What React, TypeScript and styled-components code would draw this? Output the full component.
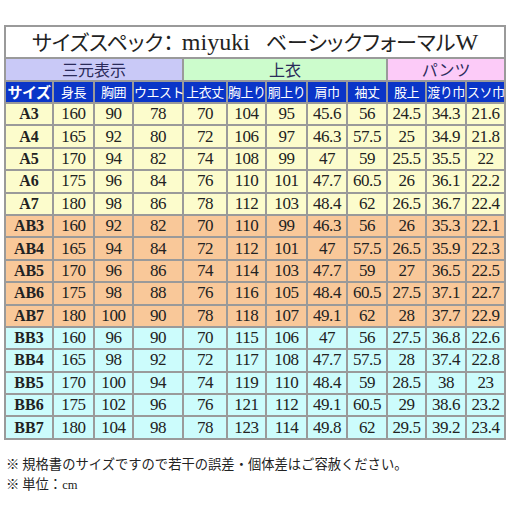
import React from 'react';
import styled, { createGlobalStyle } from 'styled-components';

const GlobalStyle = createGlobalStyle`
  body {
    margin: 0;
    background: #fff;
  }
`;

const gothic = `"Noto Sans CJK JP", "Noto Sans", sans-serif`;
const serif = `"Liberation Serif", "Noto Sans CJK JP", serif`;

const colors = {
  border: '#9a9a9a',
  head: '#0a35c8',
  lavender: '#c9c9f7',
  green: '#ccfccc',
  pink: '#fccbf8',
  yellow: '#fcfccc',
  peach: '#f9c899',
  cyan: '#ccfcfc',
  groupText: '#2a2a5a',
};

const widths = [48, 41, 39, 50, 44, 39, 41, 40, 40, 39, 40, 39];

const Page = styled.div`
  padding: 25px 0 0 4px;
`;

const Table = styled.table`
  border-collapse: collapse;
  table-layout: fixed;
  width: 502px;
  border: 2px solid ${colors.border};
`;

const TitleCell = styled.td`
  height: 29px;
  padding: 0;
  background: #fff;
  border: 2px solid ${colors.border};
  text-align: center;
  font-family: ${gothic};
  font-feature-settings: "palt";
  font-size: 21px;
  line-height: 29px;
  color: #222;
  white-space: nowrap;
`;

const Brand = styled.span`
  font-family: ${serif};
  font-size: 24px;
  margin: 0 16px 0 8px;
`;

const Latin = styled.span`
  font-family: ${serif};
  font-size: 24px;
`;

const GroupCell = styled.td<{ $bg: string }>`
  height: 21px;
  padding: 0;
  background: ${({ $bg }) => $bg};
  border: 2px solid ${colors.border};
  text-align: center;
  font-family: ${gothic};
  font-size: 16px;
  line-height: 21px;
  color: ${colors.groupText};
`;

const HeadCell = styled.th<{ $bold?: boolean }>`
  height: 20px;
  padding: 0;
  background: ${colors.head};
  border: 2px solid ${colors.border};
  text-align: center;
  font-family: ${gothic};
  font-size: ${({ $bold }) => ($bold ? '15px' : '13px')};
  font-weight: ${({ $bold }) => ($bold ? 700 : 400)};
  line-height: 20px;
  color: #fff;
  white-space: nowrap;
  letter-spacing: -0.5px;
`;

const Row = styled.tr<{ $bg: string }>`
  background: ${({ $bg }) => $bg};
`;

const SizeCell = styled.td`
  height: 20.4px;
  padding: 0;
  border: 2px solid ${colors.border};
  text-align: center;
  font-family: ${serif};
  font-weight: 700;
  font-size: 16px;
  line-height: 20px;
  color: #222;
`;

const NumCell = styled.td`
  height: 20.4px;
  padding: 0;
  border: 2px solid ${colors.border};
  text-align: center;
  font-family: ${serif};
  font-size: 17px;
  letter-spacing: -0.4px;
  line-height: 20px;
  color: #222;
`;

const Notes = styled.div`
  margin-top: 14px;
  padding-left: 2px;
  font-family: ${gothic};
  font-size: 13.3px;
  line-height: 20px;
  color: #222;
`;

const Unit = styled.span`
  font-family: ${serif};
  font-size: 12.5px;
`;

const headers = ['身長', '胸囲', 'ウエスト', '上衣丈', '胸上り', '胴上り', '肩巾', '袖丈', '股上', '渡り巾', 'スソ巾'];

const rows: (string | number)[][] = [
  ['A3', 160, 90, 78, 70, 104, 95, 45.6, 56, 24.5, 34.3, 21.6],
  ['A4', 165, 92, 80, 72, 106, 97, 46.3, 57.5, 25, 34.9, 21.8],
  ['A5', 170, 94, 82, 74, 108, 99, 47, 59, 25.5, 35.5, 22],
  ['A6', 175, 96, 84, 76, 110, 101, 47.7, 60.5, 26, 36.1, 22.2],
  ['A7', 180, 98, 86, 78, 112, 103, 48.4, 62, 26.5, 36.7, 22.4],
  ['AB3', 160, 92, 82, 70, 110, 99, 46.3, 56, 26, 35.3, 22.1],
  ['AB4', 165, 94, 84, 72, 112, 101, 47, 57.5, 26.5, 35.9, 22.3],
  ['AB5', 170, 96, 86, 74, 114, 103, 47.7, 59, 27, 36.5, 22.5],
  ['AB6', 175, 98, 88, 76, 116, 105, 48.4, 60.5, 27.5, 37.1, 22.7],
  ['AB7', 180, 100, 90, 78, 118, 107, 49.1, 62, 28, 37.7, 22.9],
  ['BB3', 160, 96, 90, 70, 115, 106, 47, 56, 27.5, 36.8, 22.6],
  ['BB4', 165, 98, 92, 72, 117, 108, 47.7, 57.5, 28, 37.4, 22.8],
  ['BB5', 170, 100, 94, 74, 119, 110, 48.4, 59, 28.5, 38, 23],
  ['BB6', 175, 102, 96, 76, 121, 112, 49.1, 60.5, 29, 38.6, 23.2],
  ['BB7', 180, 104, 98, 78, 123, 114, 49.8, 62, 29.5, 39.2, 23.4],
];

function rowColor(size: string): string {
  if (size.startsWith('AB')) return colors.peach;
  if (size.startsWith('BB')) return colors.cyan;
  return colors.yellow;
}

const App: React.FC = () => (
  <Page>
    <GlobalStyle />
    <Table>
      <colgroup>
        {widths.map((w, i) => <col key={i} style={{ width: w }} />)}
      </colgroup>
      <tbody>
        <tr>
          <TitleCell colSpan={12}>
            サイズスペック：<Brand>miyuki</Brand>ベーシックフォーマル<Latin>W</Latin>
          </TitleCell>
        </tr>
        <tr>
          <GroupCell $bg={colors.lavender} colSpan={4}>三元表示</GroupCell>
          <GroupCell $bg={colors.green} colSpan={5}>上衣</GroupCell>
          <GroupCell $bg={colors.pink} colSpan={3}>パンツ</GroupCell>
        </tr>
        <tr>
          <HeadCell $bold>サイズ</HeadCell>
          {headers.map(h => <HeadCell key={h}>{h}</HeadCell>)}
        </tr>
        {rows.map(r => (
          <Row key={r[0]} $bg={rowColor(String(r[0]))}>
            <SizeCell>{r[0]}</SizeCell>
            {r.slice(1).map((v, i) => <NumCell key={i}>{v}</NumCell>)}
          </Row>
        ))}
      </tbody>
    </Table>
    <Notes>
      <div>※ 規格書のサイズですので若干の誤差・個体差はご容赦ください。</div>
      <div>※ 単位：<Unit>cm</Unit></div>
    </Notes>
  </Page>
);

export default App;
